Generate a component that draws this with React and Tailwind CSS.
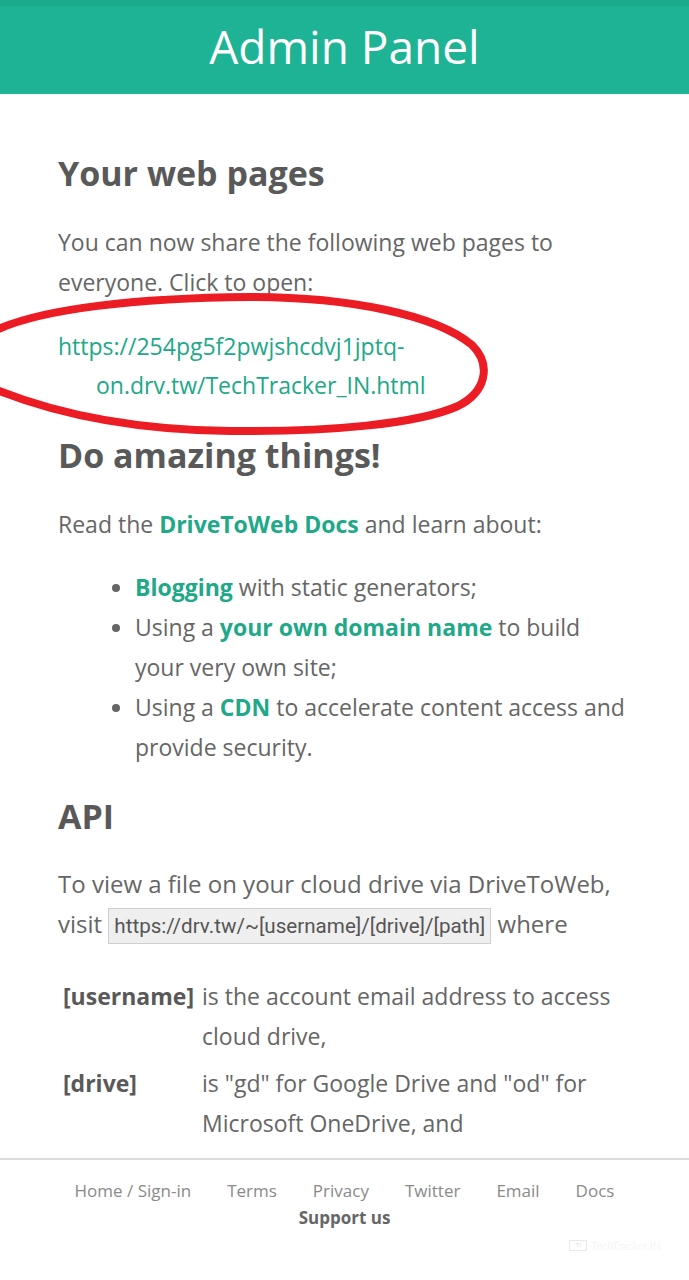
import React from 'react';

const links = ['Home / Sign-in', 'Terms', 'Privacy', 'Twitter', 'Email', 'Docs'];

const App = () => {
  return (
    <div className="h-[1280px] flex flex-col bg-white text-[#666] font-['Open_Sans',sans-serif] overflow-hidden">
      {/* Header */}
      <header className="h-[94px] shrink-0 bg-[#1db394] border-t-[6px] border-[#1ba98c] flex items-center justify-center">
        <h1 className="text-[46px] leading-none text-white -mt-[8px]">Admin Panel</h1>
      </header>

      {/* Main */}
      <main className="flex-1 overflow-hidden px-[58px] pt-[53px] relative">
        <h2 className="text-[34px] font-bold text-[#595959] leading-[52px]">Your web pages</h2>
        <p className="mt-[23px] text-[23px] leading-[40px]">
          You can now share the following web pages to everyone. Click to open:
        </p>

        <a className="block mt-[25px] text-[23px] leading-[39px] text-[#20a888] pl-[38px] -indent-[38px]">
          https://254pg5f2pwjshcdvj1jptq-on.drv.tw/TechTracker_IN.html
        </a>

        <h2 className="mt-[24px] text-[34px] font-bold text-[#595959] leading-[52px]">Do amazing things!</h2>
        <p className="mt-[23px] text-[23px] leading-[40px]">
          Read the <a className="font-bold text-[#20a888]">DriveToWeb Docs</a> and learn about:
        </p>

        <ul className="mt-[23px] pl-[77px] list-disc marker:text-[#666] text-[23px] leading-[40px]">
          <li>
            <a className="font-bold text-[#20a888]">Blogging</a> with static generators;
          </li>
          <li>
            Using a <a className="font-bold text-[#20a888]">your own domain name</a> to build your very own site;
          </li>
          <li>
            Using a <a className="font-bold text-[#20a888]">CDN</a> to accelerate content access and provide security.
          </li>
        </ul>

        <h2 className="mt-[23px] text-[34px] font-bold text-[#595959] leading-[52px]">API</h2>
        <p className="mt-[22px] text-[24px] leading-[40px]">
          To view a file on your cloud drive via DriveToWeb, visit{' '}
          <code className="font-['Roboto',sans-serif] text-[20.6px] text-[#555] bg-[#efefef] border border-[#cfcfcf] px-[5px] py-[5px]">
            https://drv.tw/~[username]/[drive]/[path]
          </code>{' '}
          where
        </p>

        <div className="mt-[30px] ml-[5px] grid grid-cols-[139px_1fr] gap-y-[7px] text-[23px] leading-[40px]">
          <div className="font-bold text-[#595959]">[username]</div>
          <div>is the account email address to access cloud drive,</div>
          <div className="font-bold text-[#595959]">[drive]</div>
          <div>is "gd" for Google Drive and "od" for Microsoft OneDrive, and</div>
        </div>

        {/* red annotation drawn over the link */}
        <svg
          className="absolute left-0 top-[196px] pointer-events-none"
          width="500"
          height="150"
          viewBox="0 0 500 150"
        >
          <path
            d="M -8 42 C 40 18, 140 8, 250 7 C 350 7, 436 25, 472 55 C 492 75, 486 102, 458 116 C 418 134, 330 142, 230 141 C 140 140, 60 126, -8 98"
            fill="none"
            stroke="#ec1c24"
            strokeWidth="8"
            strokeLinecap="round"
          />
        </svg>
      </main>

      {/* Footer */}
      <footer className="h-[122px] shrink-0 border-t-2 border-[#dcdcdc] bg-white relative">
        <nav className="mt-[19px] flex justify-center gap-[36px] text-[17px] leading-[24px] text-[#8a8a8a]">
          {links.map((l) => (
            <a key={l}>{l}</a>
          ))}
        </nav>
        <div className="mt-[3px] text-center text-[17px] leading-[24px] font-bold text-[#666]">Support us</div>
        <div className="absolute right-[28px] bottom-[26px] flex items-center gap-[4px] opacity-40">
          <span className="w-[18px] h-[11px] border border-[#ccc] text-[6px] leading-[9px] text-center text-[#aaa]">TI</span>
          <span className="text-[11px] text-[#e8e8e8] font-['Lato',sans-serif]">TechTracker.IN</span>
        </div>
      </footer>
    </div>
  );
};

export default App;
